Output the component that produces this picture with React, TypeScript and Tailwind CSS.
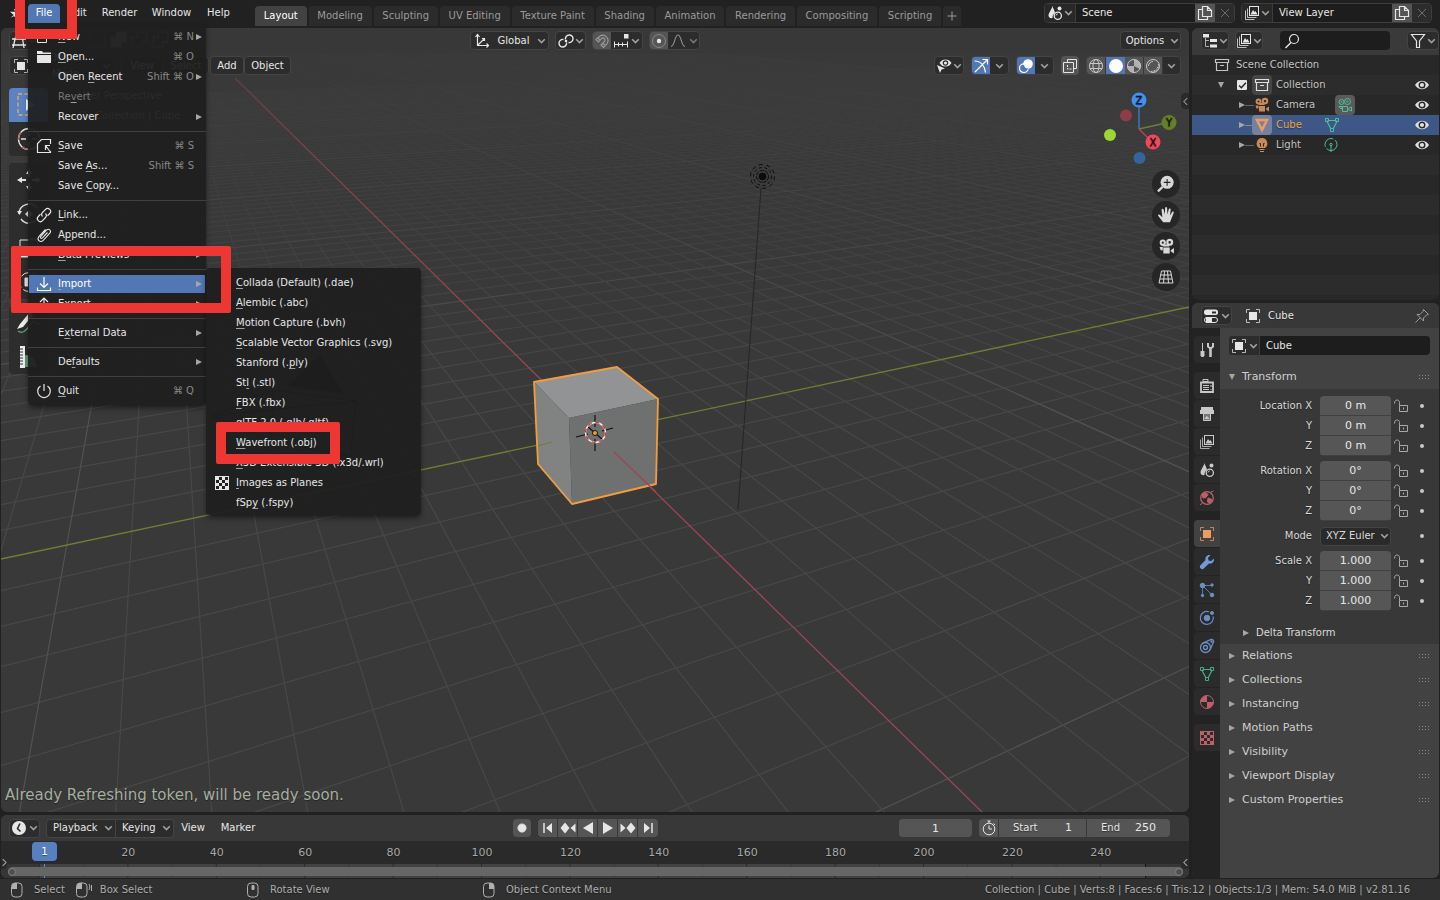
import type { ReactNode } from "react";

/* ---------- icon helpers ---------- */

type IconProps = { children: ReactNode; className?: string; sw?: number };

function Ico({ children, className = "size-4", sw = 1 }: IconProps) {
  return (
    <svg viewBox="0 0 16 16" className={`shrink-0 ${className}`} fill="none" stroke="currentColor" strokeWidth={sw} aria-hidden="true">
      {children}
    </svg>
  );
}

const Chevron = ({ className = "text-[#a0a0a0]" }: { className?: string }) => (
  <svg viewBox="0 0 9 6" className={`h-[6px] w-[9px] shrink-0 ${className}`} fill="none" stroke="currentColor" strokeWidth="1.6" aria-hidden="true">
    <path d="M1.2 1.2 4.5 4.5 7.8 1.2" />
  </svg>
);

const Triangle = ({ down = false }: { down?: boolean }) => (
  <svg viewBox="0 0 6 6" className="size-[6px] shrink-0 fill-[#a6a6a6]" aria-hidden="true">
    <path d={down ? "M0 0h6L3 6z" : "M0 0v6l6-3z"} />
  </svg>
);

const ObjectIcon = ({ className = "size-4" }: { className?: string }) => (
  <Ico className={className}>
    <path d="M1.5 5V1.5H5M11 1.5h3.5V5M14.5 11v3.5H11M5 14.5H1.5V11" opacity=".75" />
    <rect x="4" y="4" width="8" height="8" fill="currentColor" stroke="none" />
  </Ico>
);

const LayersIcon = () => (
  <Ico>
    <rect x="5.5" y="1.5" width="9" height="9" />
    <path d="M6.5 9.5 9 5l1.5 2 1-1 2 3.5z" fill="currentColor" stroke="none" />
    <path d="M3.5 3.5v9h9M1.5 5.5v9h9" opacity=".8" />
  </Ico>
);

const SceneIcon = () => (
  <Ico>
    <path d="M5.5 1C4.5 5 1.5 8 1.5 10.5c0 2 2 3 4 2.500 0-3 1-4 2.500-5C7.500 5 6 3.500 5.500 1z" fill="currentColor" stroke="none" />
    <circle cx="10.8" cy="10.7" r="3.6" strokeWidth="1.3" />
    <path d="M9 10.500c.2-1 .8-1.500 1.800-1.600" />
    <circle cx="12.5" cy="3.5" r="2" fill="currentColor" stroke="none" />
  </Ico>
);

const CameraIcon = ({ className = "size-4" }: { className?: string }) => (
  <Ico className={className}>
    <path
      d="M4.500 1.500a2.900 2.900 0 1 0 0 5.800 2.900 2.900 0 0 0 0-5.800zM4.500 3.400a1 1 0 1 1 0 2 1 1 0 0 1 0-2zM11 .8a3.300 3.300 0 1 0 0 6.600 3.300 3.300 0 0 0 0-6.600zM11 2.900a1.200 1.200 0 1 1 0 2.400 1.200 1.200 0 0 1 0-2.400z"
      fill="currentColor" stroke="none" fillRule="evenodd"
    />
    <path d="M4.500 6h6v2h-6zM5 9h6v5.500H5zM12 11.500 15 9.500v5l-3-2zM1.500 8.500h3v3h-2z" fill="currentColor" stroke="none" />
  </Ico>
);

const CameraOutline = () => (
  <Ico>
    <circle cx="4.5" cy="5" r="2.5" /><circle cx="10.5" cy="4.5" r="3" />
    <circle cx="4.5" cy="5" r=".5" /><circle cx="10.5" cy="4.5" r=".7" />
    <path d="M5.500 9.500h5v5h-5zM11.500 11.500l3-1.500v4l-3-1.500M2 9.500h3v2H3.500z" />
  </Ico>
);

const CollectionIcon = () => (
  <Ico>
    <path d="M1.500 2.500h13v3h-13zM2.500 5.500h11v8h-11zM6 8.500h4" strokeWidth="1.2" />
  </Ico>
);

const EyeIcon = () => (
  <Ico className="h-4 w-4">
    <path d="M1 8c2-3 4.500-4.300 7-4.300S13 5 15 8c-2 3-4.500 4.300-7 4.300S3 11 1 8z" fill="#e0e0e0" stroke="none" />
    <circle cx="8" cy="8" r="2.8" stroke="#282828" strokeWidth="1.4" fill="#e0e0e0" />
  </Ico>
);

const MeshIcon = () => (
  <Ico>
    <path d="M3.500 3.500h9M3.300 5l3.700 7M12.700 5 9 12" strokeWidth="1.2" />
    <path d="M1.500 1.500h3v3h-3zM11.500 1.500h3v3h-3zM6.500 11.500h3v3h-3z" />
  </Ico>
);

const CopyIcon = () => (
  <Ico sw={1.2}>
    <path d="M5.500 1.500h5l4 4v6h-9zM10.500 1.500v4h4M5.500 4.500h-4v10h9v-3" />
  </Ico>
);

const UnlockIcon = () => (
  <Ico className="size-4 text-[#a8a8a8]">
    <path d="M6.500 7.500h8v6h-8zM10.500 9.500v2M1.500 5.500C1.500 2.500 3 2 4 2s2.500.5 2.500 2.500v3" />
  </Ico>
);

const CloseIcon = () => <Ico className="size-4 text-[#6c6c6c]"><path d="m4 4 8 8M12 4l-8 8" /></Ico>;

const Checker = ({ color = "#e6e6e6" }: { color?: string }) => (
  <svg viewBox="0 0 14 14" className="size-[14px] shrink-0" aria-hidden="true">
    <rect x=".5" y=".5" width="13" height="13" fill="none" stroke={color} />
    {[0, 1, 2, 3].flatMap((r) =>
      [0, 1, 2, 3].filter((c) => (r + c) % 2 === 0).map((c) => (
        <rect key={`${r}-${c}`} x={1 + c * 3} y={1 + r * 3} width="3" height="3" fill={color} />
      )),
    )}
  </svg>
);

const Underlined = ({ text, at }: { text: string; at: number }) => (
  <span className="whitespace-pre">
    {at < 0 ? text : text.slice(0, at)}
    {at >= 0 && <u className="decoration-[#a0a0a0] underline-offset-2">{text[at]}</u>}
    {at >= 0 && text.slice(at + 1)}
  </span>
);

/* ---------- top bar ---------- */

const tabs = ["Modeling", "Sculpting", "UV Editing", "Texture Paint", "Shading", "Animation", "Rendering", "Compositing", "Scripting"];

function DataField({ label, value, icon }: { label: string; value: string; icon: ReactNode }) {
  return (
    <div className="flex h-5 w-[191px] overflow-hidden rounded border border-[#3d3d3d] bg-[#1d1d1d]">
      <button type="button" aria-label={`Browse ${label}`} className="flex w-[31px] items-center justify-center gap-px border-r border-[#3d3d3d] bg-[#282828]">
        {icon}<Chevron />
      </button>
      <input aria-label={label} defaultValue={value} className="min-w-0 flex-1 bg-transparent px-[6px] outline-none" />
      <button type="button" aria-label={`New ${label}`} className="flex w-5 items-center justify-center bg-[#545454]"><CopyIcon /></button>
      <button type="button" aria-label={`Remove ${label}`} className="flex w-[19px] items-center justify-center bg-[#2c2c2c]"><CloseIcon /></button>
    </div>
  );
}

function TopBar() {
  return (
    <header className="flex h-7 shrink-0 justify-between pr-2">
      <div className="flex">
        <nav className="flex h-[26px] items-center pl-[9px]">
          <Ico className="size-[15px]"><path d="M1 6h6L5 3.500h2.500L14 9a4 4 0 0 1-7 3l-2-1-3.500 1.500L5 9.500z" fill="currentColor" stroke="none" /></Ico>
          <button type="button" className="ml-1 h-[19px] w-8 rounded-t bg-[#5277b5] text-white">File</button>
          <button type="button" className="h-5 w-[34px]">Edit</button>
          <button type="button" className="h-5 w-[51px]">Render</button>
          <button type="button" className="h-5 w-[53px]">Window</button>
          <button type="button" className="h-5 w-[41px]">Help</button>
        </nav>
        <div className="ml-[16px] flex w-[706px] items-end gap-[2px] pb-[2px] text-[#9a9a9a]">
          <button type="button" className="h-5 flex-auto rounded-t bg-[#424242] px-[8px] text-white">Layout</button>
          {tabs.map((t) => (
            <button key={t} type="button" className="h-5 flex-auto rounded-t bg-[#2b2b2b] px-[8px]">{t}</button>
          ))}
          <button type="button" aria-label="Add workspace" className="flex h-5 w-[18px] items-center justify-center rounded-t bg-[#2b2b2b]">
            <Ico className="size-3"><path d="M8 2v12M2 8h12" strokeWidth="1.4" /></Ico>
          </button>
        </div>
      </div>
      <div className="flex gap-[6px] pt-[3px]">
        <DataField label="Scene" value="Scene" icon={<SceneIcon />} />
        <DataField label="View Layer" value="View Layer" icon={<LayersIcon />} />
      </div>
    </header>
  );
}

/* ---------- 3D viewport ---------- */

const CX = 595, CY = 433, FOCAL = 830, DIST = 18;

function project(x: number, y: number): [number, number] {
  const depth = DIST - (0.807 * x - 0.3746 * y);
  const right = 0.421 * x + 0.9071 * y;
  const up = -0.4141 * x + 0.1922 * y;
  return [CX + (FOCAL * right) / depth, CY - (FOCAL * up) / depth];
}

function gridLines() {
  const lines: { d: string; major: boolean }[] = [];
  const limit = DIST - 2;
  const push = (a: [number, number], b: [number, number], major: boolean) =>
    lines.push({ d: `M${a[0].toFixed(1)} ${a[1].toFixed(1)}L${b[0].toFixed(1)} ${b[1].toFixed(1)}`, major });
  for (let x = -90; x <= 24; x++) {
    if (x === 0) continue;
    const near = Math.max(-120, (0.807 * x - limit) / 0.3746);
    push(project(x, near), project(x, 250), x % 10 === 0);
  }
  for (let y = -50; y <= 90; y++) {
    if (y === 0) continue;
    const near = Math.min(60, (limit + 0.3746 * y) / 0.807);
    push(project(near, y), project(-250, y), y % 10 === 0);
  }
  return lines;
}

function SceneDrawing() {
  return (
    <svg viewBox="1 28 1188 784" preserveAspectRatio="xMidYMid slice" className="absolute inset-0 size-full" aria-label="3D scene">
      <defs>
        <linearGradient id="fade" gradientUnits="userSpaceOnUse" x1="0" y1="50" x2="0" y2="400">
          <stop offset="0" stopColor="#fff" stopOpacity=".1" />
          <stop offset=".4" stopColor="#fff" stopOpacity=".4" />
          <stop offset="1" stopColor="#fff" stopOpacity="1" />
        </linearGradient>
        <mask id="fadeMask" maskUnits="userSpaceOnUse" x="0" y="0" width="1200" height="900">
          <rect width="1200" height="900" fill="url(#fade)" />
        </mask>
        <linearGradient id="redFade" gradientUnits="userSpaceOnUse" x1="235" y1="78" x2="595" y2="433">
          <stop offset="0" stopColor="#9d4552" stopOpacity=".45" />
          <stop offset=".7" stopColor="#9d4552" />
        </linearGradient>
      </defs>
      <g mask="url(#fadeMask)" fill="none">
        {gridLines().map((l, i) => (
          <path key={i} d={l.d} stroke={l.major ? "#525252" : "#484848"} strokeWidth="1.2" />
        ))}
      </g>
      <path d="M1 559 1189 307" stroke="#6d8030" strokeWidth="1.3" />
      <path d="M235 78 595 433" stroke="url(#redFade)" strokeWidth="1.3" />
      <path d="M595 433 982 812" stroke="#9d4552" strokeWidth="1.3" />

      <path d="M761 188 738 510" stroke="#262626" />
      <g fill="none" stroke="#0c0c0c">
        <circle cx="762.5" cy="176.5" r="3.4" fill="#0c0c0c" />
        <circle cx="762.5" cy="176.5" r="6" strokeDasharray="4 1" />
        <circle cx="762.5" cy="176.5" r="9" strokeDasharray="3 2.5" />
        <circle cx="762.5" cy="176.5" r="12" strokeDasharray="4 3.5" />
      </g>

      <path d="m320 355-33 31 57 8z" fill="#000" />
      <path d="m212 416 61-26 83 11-6 55-79-15zM212 416l144-15M212 416l138 40M273 390l-2 51" fill="none" stroke="#000" />

      <path d="M534 382 617 367 658 399 569 418z" fill="#929394" />
      <path d="M534 382 569 418 572 504 538 464z" fill="#818382" />
      <path d="M569 418 658 399 656 484 572 504z" fill="#6f7070" />
      <path d="m534 382 83-15 41 32-2 85-84 20-34-40z" fill="none" stroke="#f19d3f" strokeWidth="1.8" strokeLinejoin="round" />
      <path d="m538 446 14-4" stroke="#6d8030" strokeWidth="1.2" />
      <path d="m614 452 42 40" stroke="#9d4552" strokeWidth="1.3" />
      <g stroke="#111" strokeWidth="1.2">
        <path d="M595 415v12M595 439v12M576 437l12-3M602 431l11-3M587 426l16 14" />
      </g>
      <circle cx="595.5" cy="432.5" r="10" fill="none" stroke="#eee" strokeWidth="1.3" />
      <circle cx="595.5" cy="432.5" r="10" fill="none" stroke="#e02525" strokeWidth="1.3" strokeDasharray="3.9 3.9" />
      <circle cx="595" cy="433" r="2.5" fill="#f19d3f" stroke="#1a1a1a" />
    </svg>
  );
}

const frame = "flex h-[19px] items-center rounded border border-[#444] bg-[#2c2c2c]";
const box = "flex h-[19px] items-center justify-center rounded border border-[#444] bg-[#2c2c2c]";
const onBlue = "flex h-full w-[18px] items-center justify-center bg-[#5277b5] text-white";
const cell = "flex h-full w-[19px] items-center justify-center border-r border-[#383838] bg-[#555] text-[#c8c8c8]";

function ViewportHeader() {
  return (
    <>
      <div className="relative grid h-[25px] grid-cols-[1fr_auto_1fr] items-center bg-[#383838] px-2">
        <div className="flex gap-[10px]">
          <button type="button" aria-label="Editor type" className={`${box} w-[30px] gap-px`}>
            <Ico><path d="M1 6h14M1 12h14M5 2 2 15M11 2l2 13" strokeWidth="1.3" /></Ico><Chevron />
          </button>
          <div className="flex gap-1 pl-10 text-[#5277b5]">
            <Ico className="size-[17px]"><rect x="1" y="1" width="14" height="14" strokeDasharray="2 1" /></Ico>
            <Ico className="size-[17px] text-[#999]"><path d="M1 6h5V1h9v9h-5v5H1z" fill="currentColor" /></Ico>
            <Ico className="size-[17px] text-[#999]"><path d="M1 6h5V1h9v9h-5v5H1z" strokeDasharray="2 1" /></Ico>
            <Ico className="size-[17px] text-[#999]"><path d="M1 6h5V1h9v9h-5v5H1z" /></Ico>
          </div>
        </div>
        <div className="mr-5 flex gap-[6px]">
          <button type="button" className={`${frame} w-[79px] justify-between pl-[3px] pr-[2px]`}>
            <Ico><path d="M3.500 2v10.500H14M3.500 12.500 10 6M1.500 4l2-2.500 2 2.500M12.500 10.500l2 2-2 2M8 5.500h2.500V8" strokeWidth="1.2" /></Ico>
            <span>Global</span><Chevron />
          </button>
          <button type="button" aria-label="Pivot point" className={`${box} w-[31px] gap-px`}>
            <Ico sw={1.4}><path d="M7.500 6.500a3.800 3.800 0 1 1 3 3M8.500 9.500a3.800 3.800 0 1 1-3-3" /><circle cx="8" cy="8" r="1.3" fill="currentColor" stroke="none" /></Ico><Chevron />
          </button>
          <div className={`${box} w-[51px] overflow-hidden`}>
            <button type="button" aria-label="Snap" className="flex h-full w-[18px] items-center justify-center bg-[#555] text-[#999]">
              <Ico sw={1.2}><path d="M2 6.500 5.500 3.500a5.200 5.200 0 0 1 7.300 7.300L9.500 14.500 7 12l3.300-3.500a1.900 1.900 0 0 0-2.800-2.800L4.500 9zM4 5l2.500 2.500M8.700 10l2.500 2.500" /></Ico>
            </button>
            <button type="button" aria-label="Snap to" className="flex flex-1 items-center justify-center gap-[2px]">
              <Ico><path d="M1.500 8.500v6M14.500 8.500v6M1.500 11.500h13M5.500 9.500v4M9.500 9.500v4" /><rect x="11" y="1" width="4.5" height="4.5" fill="currentColor" stroke="none" /></Ico><Chevron />
            </button>
          </div>
          <div className={`${box} w-[51px] overflow-hidden`}>
            <button type="button" aria-label="Proportional editing" className="flex h-full w-[18px] items-center justify-center bg-[#555]">
              <Ico><circle cx="8" cy="8" r="6.5" stroke="#888" /><circle cx="8" cy="8" r="2.2" fill="currentColor" stroke="none" /></Ico>
            </button>
            <button type="button" aria-label="Falloff" className="flex flex-1 items-center justify-center gap-[3px] text-[#8c8c8c]">
              <Ico sw={1.2}><path d="M1 13.500c4-.5 3.500-11.500 7-11.500s3 11 7 11.500" /></Ico><Chevron className="text-[#777]" />
            </button>
          </div>
        </div>
        <button type="button" className={`${box} w-[61px] justify-self-end gap-[6px] pl-1`}>Options<Chevron /></button>
      </div>

      <div className="relative flex h-[25px] items-center justify-between px-2">
        <div className="flex items-center">
          <button type="button" className={`${frame} w-[106px] gap-[6px] px-[3px]`}><ObjectIcon /><span>Object Mode</span><Chevron /></button>
          <button type="button" className={`${box} ml-[6px] w-[42px]`}>View</button>
          <button type="button" className={`${box} w-[46px]`}>Select</button>
          <button type="button" className={`${box} ml-px w-[34px]`}>Add</button>
          <button type="button" className={`${box} w-[47px]`}>Object</button>
        </div>
        <div className="flex gap-[7px]">
          <button type="button" aria-label="Selectability" className={`${box} w-[30px] gap-px`}>
            <Ico>
              <path d="M3.500 5C5 2.500 7 1.500 9.500 1.500s4.500 1 6 3.500c-1.500 2.500-3.500 3.500-6 3.500S5 7.500 3.500 5z" fill="currentColor" stroke="none" />
              <circle cx="9.5" cy="5" r="2.2" stroke="#2c2c2c" strokeWidth="1.2" />
              <path d="m1 7 8 3.500-3.500 1L4 15z" fill="currentColor" stroke="none" />
            </Ico><Chevron />
          </button>
          <div className={`${box} w-[38px] overflow-hidden`}>
            <button type="button" aria-label="Gizmos" className={onBlue}><Ico sw={1.2}><path d="M1.500 3C8 3 12 8 12.500 14.500M2 14 14 2M9.500 1.500h5v5" /></Ico></button>
            <button type="button" aria-label="Gizmo options" className="flex flex-1 justify-center"><Chevron /></button>
          </div>
          <div className={`${box} w-[38px] overflow-hidden`}>
            <button type="button" aria-label="Overlays" className={onBlue}>
              <Ico sw={1.2}><circle cx="10" cy="6" r="4.8" fill="currentColor" stroke="none" /><circle cx="5.8" cy="10.2" r="4.3" /><path d="M5.500 7a4.500 4.500 0 0 0 4.800 4" stroke="#5277b5" /></Ico>
            </button>
            <button type="button" aria-label="Overlay options" className="flex flex-1 justify-center"><Chevron /></button>
          </div>
          <button type="button" aria-label="X-ray" className="flex h-[19px] w-[18px] items-center justify-center rounded bg-[#555]">
            <Ico><path d="M5.500 4.500v-3h9v9h-3" /><path d="M1.500 4.500h10v10h-10z" /><path d="M5.500 7v4h4" strokeDasharray="2 1" /></Ico>
          </button>
          <div className={`${box} w-[95px] overflow-hidden`}>
            <button type="button" aria-label="Wireframe" className={cell}><Ico><circle cx="8" cy="8" r="6.5" /><ellipse cx="8" cy="8" rx="3" ry="6.5" /><path d="M2 5.500h12M2 10.500h12" /></Ico></button>
            <button type="button" aria-label="Solid" className="flex h-full w-[19px] items-center justify-center bg-[#5277b5] text-white"><Ico><circle cx="8" cy="8" r="7" fill="currentColor" stroke="none" /></Ico></button>
            <button type="button" aria-label="Material preview" className={cell}><Ico><circle cx="8" cy="8" r="6.5" /><path d="M8 1.500V8l6 3A6.500 6.500 0 0 0 8 1.500zM8 8v6.500A6.500 6.500 0 0 1 1.500 8z" fill="currentColor" stroke="none" opacity=".8" /></Ico></button>
            <button type="button" aria-label="Rendered" className={cell}><Ico><circle cx="8" cy="8" r="6.5" /><path d="M3.500 8A4.500 4.500 0 0 1 8 3.500" /><path d="M6 13.500c4 0 7.500-3.500 7.500-7.500M9 13.500c2.500-.5 4.500-2.500 5-5" strokeDasharray="1.5 1" /></Ico></button>
            <button type="button" aria-label="Shading options" className="flex flex-1 justify-center"><Chevron /></button>
          </div>
        </div>
      </div>
    </>
  );
}

function ToolShelf() {
  const tool = "flex h-[34px] w-[39px] items-center justify-center";
  return (
    <div className="absolute left-2 top-[60px] flex flex-col gap-[7px]">
      <div className="overflow-hidden rounded bg-[#2d2d2d]">
        <button type="button" aria-label="Select box" className={`${tool} bg-[#5b83c4]`}>
          <svg viewBox="0 0 24 24" className="size-6"><rect x="1" y="1" width="21" height="21" fill="none" stroke="#f5a94a" strokeWidth="1.3" strokeDasharray="4 2.5" /><path d="m9 6 10 6.500-5 1L9 18z" fill="#fff" /></svg>
        </button>
        <button type="button" aria-label="Cursor" className={tool}>
          <svg viewBox="0 0 24 24" className="size-6" fill="none" stroke="#e6e6e6" strokeWidth="1.3"><circle cx="12" cy="12" r="10.5" /><circle cx="12" cy="12" r="10.5" stroke="#b55" strokeDasharray="8 8" /><path d="M12 4v5M12 15v5M4 12h5M15 12h5" /></svg>
        </button>
      </div>
      <div className="overflow-hidden rounded bg-[#2d2d2d]">
        <button type="button" aria-label="Move" className={tool}>
          <svg viewBox="0 0 24 24" className="size-6" fill="#e6e6e6"><path d="m0 12 5-3v2h4v2H5v2zM24 12l-5-3v2h-4v2h4v2zM12 1 9 6h2v3h2V6h2zM12 23l-3-5h2v-3h2v3h2z" /></svg>
        </button>
        <button type="button" aria-label="Rotate" className={tool}>
          <svg viewBox="0 0 24 24" className="size-6" fill="none" stroke="#e6e6e6" strokeWidth="1.3"><path d="M2 12a10 10 0 0 1 18-6M4 17a10 10 0 0 0 18-5" /><path d="M0 9h5l-2.500 4zM12 8l4 4-4 4-4-4z" fill="#e6e6e6" stroke="none" /></svg>
        </button>
        <button type="button" aria-label="Scale" className={tool}>
          <svg viewBox="0 0 24 24" className="size-6" fill="none" stroke="#e6e6e6"><path d="M3 4h18M3 4v18M13 3l8 0v8" /><path d="M3 12h9v9H3z" fill="#e6e6e6" /></svg>
        </button>
        <button type="button" aria-label="Transform" className={tool}>
          <svg viewBox="0 0 24 24" className="size-6" fill="none" stroke="#e6e6e6"><circle cx="12" cy="12" r="9.5" strokeDasharray="9 3" /><path d="M8 8h8v8H8z" fill="#e6e6e6" /></svg>
        </button>
      </div>
      <div className="overflow-hidden rounded bg-[#2d2d2d]">
        <button type="button" aria-label="Annotate" className={tool}>
          <svg viewBox="0 0 24 24" className="size-6" fill="none"><path d="M1 20c5 4 9-2 13-7s6-1 9 1" stroke="#5f9c72" strokeWidth="1.3" /><path d="M0 18 3 13 13 1l3 3L6 16z" fill="#eee" /></svg>
        </button>
        <button type="button" aria-label="Measure" className={tool}>
          <svg viewBox="0 0 24 24" className="size-6"><path d="M3 1h5v22H3z" fill="#eee" /><path d="M3 4h3M3 7h3M3 10h3M3 13h3M3 16h3M3 19h3" stroke="#333" /><path d="M8 10c7 0 12 6 12 12H8z" fill="#5f9c72" /></svg>
        </button>
      </div>
    </div>
  );
}

function AxisGizmo() {
  return (
    <svg viewBox="0 0 80 76" className="absolute right-2 top-[62px] h-[76px] w-20" textAnchor="middle" aria-label="Orientation gizmo">
      <circle cx="25" cy="25.5" r="6" fill="#8d3d48" />
      <circle cx="38.5" cy="68" r="6" fill="#35649a" />
      <path d="M38 39V17" stroke="#3f7fc0" strokeWidth="1.3" />
      <path d="m38 39 27-6" stroke="#6d8030" strokeWidth="1.3" />
      <path d="m38 39 10 10" stroke="#c04555" strokeWidth="1.3" />
      <circle cx="9" cy="45" r="6" fill="#9bd836" />
      <circle cx="38" cy="10" r="7.5" fill="#3d92f3" />
      <circle cx="68" cy="32.5" r="7.5" fill="#657e29" />
      <circle cx="52" cy="52" r="7.5" fill="#f0485c" />
      <g fill="#141414" stroke="#141414" strokeWidth=".3" fontSize="10">
        <text x="38" y="14">Z</text><text x="68" y="36">Y</text><text x="52" y="56">X</text>
      </g>
    </svg>
  );
}

function NavButtons() {
  const b = "flex size-7 items-center justify-center rounded-full bg-[#262626] text-[#d8d8d8]";
  return (
    <div className="absolute right-[9px] top-[142px] flex flex-col gap-[3px]">
      <button type="button" aria-label="Zoom" className={b}>
        <Ico className="size-[18px]"><circle cx="9" cy="6.5" r="5.8" fill="currentColor" stroke="none" /><path d="M5 10.500.8 14.500" strokeWidth="2" /><path d="M9 3.500v6M6 6.500h6" stroke="#262626" /></Ico>
      </button>
      <button type="button" aria-label="Pan" className={b}>
        <Ico className="size-[18px]"><path d="M5.500 14.500C4 12.500 2.500 10.500.8 8.500c.3-1.300 1.600-1 2.700.3L4.800 10 4 3c.8-1.200 1.800-.6 2 .5L7 7.500 7.200 1.500c.8-1 1.700-.6 1.800.4L9.200 7.500 10.600 2.500c1-.8 1.700-.1 1.600.9L11.500 8.500 13.600 5c1.200-.3 1.500.4 1.200 1.300L12.500 12l-1 2.500z" fill="currentColor" stroke="none" /></Ico>
      </button>
      <button type="button" aria-label="Camera view" className={b}><CameraIcon className="size-[17px]" /></button>
      <button type="button" aria-label="Perspective" className={b}>
        <Ico><path d="M3.500 2h9L15 14H1zM2.500 6h11M2 10h12M6.500 2 5.500 14M9.500 2l1 12" /></Ico>
      </button>
    </div>
  );
}

function Viewport() {
  return (
    <section aria-label="3D Viewport" className="relative min-h-0 flex-1 overflow-hidden rounded-md bg-[#393939]">
      <SceneDrawing />
      <ViewportHeader />
      <ToolShelf />
      <div className="absolute left-[77px] top-[58px] leading-5 text-[#d8d8d8]">
        <p>User Perspective</p>
        <p>(1) Collection | Cube</p>
      </div>
      <AxisGizmo />
      <NavButtons />
      <button type="button" aria-label="Open sidebar" className="absolute right-0 top-[65px] flex h-4 w-2 items-center justify-center rounded-l bg-[#2a2a2a]">
        <Ico className="size-[9px] text-[#999]"><path d="M11 2 5 8l6 6" strokeWidth="1.8" /></Ico>
      </button>
      <p className="absolute bottom-[7px] left-1 text-[15px] leading-5 text-[#a5ae9f]">Already Refreshing token, will be ready soon.</p>
    </section>
  );
}

/* ---------- timeline ---------- */

function Timeline() {
  const frames = Array.from({ length: 12 }, (_, i) => (i + 1) * 20);
  const t = "flex h-full w-5 items-center justify-center border-r border-[#383838] last:border-0";
  return (
    <section aria-label="Timeline" className="relative h-[63px] shrink-0 overflow-hidden rounded-md bg-[#424242]">
      <div className="grid h-[26px] grid-cols-[1fr_auto_1fr] items-center bg-[#383838] pl-2 pr-[19px]">
        <div className="flex items-center">
          <button type="button" aria-label="Editor type" className={`${box} w-[31px] gap-[2px]`}>
            <Ico><circle cx="8" cy="8" r="7" fill="currentColor" stroke="none" /><path d="M9 3.500 6.500 8.500 9.500 11.500" stroke="#2c2c2c" strokeWidth="1.6" /></Ico><Chevron />
          </button>
          <button type="button" className={`${frame} ml-[6px] w-[70px] justify-between rounded-r-none pl-[6px] pr-[2px]`}>Playback<Chevron /></button>
          <button type="button" className={`${frame} w-[58px] justify-between rounded-l-none border-l-0 pl-[6px] pr-[2px]`}>Keying<Chevron /></button>
          <button type="button" className="ml-[5px] w-[28px]">View</button>
          <button type="button" className="ml-[11px] w-10">Marker</button>
        </div>
        <div className="mr-[8px] flex gap-[7px] text-[#e6e6e6]">
          <button type="button" aria-label="Auto keying" className="flex h-[18px] w-[18px] items-center justify-center rounded bg-[#555]"><Ico className="size-3"><circle cx="8" cy="8" r="5.5" fill="currentColor" /></Ico></button>
          <div className="flex h-[18px] overflow-hidden rounded bg-[#555]">
            <button type="button" aria-label="Jump to start" className={t}><Ico><path d="M4 3v10" strokeWidth="1.5" /><path d="m12 3-6 5 6 5z" fill="currentColor" stroke="none" /></Ico></button>
            <button type="button" aria-label="Previous keyframe" className={t}><Ico><path d="m5 2.500 4.500 5.500L5 13.500.5 8zM15.500 3.500v9L10.500 8z" fill="currentColor" stroke="none" /></Ico></button>
            <button type="button" aria-label="Play reverse" className={t}><Ico><path d="M13 2v12L3 8z" fill="currentColor" stroke="none" /></Ico></button>
            <button type="button" aria-label="Play" className={t}><Ico><path d="M3 2v12l10-6z" fill="currentColor" stroke="none" /></Ico></button>
            <button type="button" aria-label="Next keyframe" className={t}><Ico><path d="m11 2.500 4.500 5.500-4.500 5.500L6.500 8zM.5 3.500v9l5-4.500z" fill="currentColor" stroke="none" /></Ico></button>
            <button type="button" aria-label="Jump to end" className={t}><Ico><path d="M12 3v10" strokeWidth="1.5" /><path d="m4 3 6 5-6 5z" fill="currentColor" stroke="none" /></Ico></button>
          </div>
        </div>
        <div className="flex items-center justify-self-end text-[#e6e6e6]">
          <input aria-label="Current frame" defaultValue="1" className="h-[18px] w-[73px] rounded bg-[#555] text-center text-[11px] outline-none" />
          <button type="button" aria-label="Use preview range" className="ml-[7px] flex h-[18px] w-[19px] items-center justify-center rounded-l bg-[#555]">
            <Ico><circle cx="8" cy="9" r="5.8" /><path d="M8 5.500V9h3M6.500 1h3M8 1v2M12.500 3.500l1.500 1.500" /></Ico>
          </button>
          <label className="ml-px flex h-[18px] w-[87px] items-center justify-between bg-[#555] px-[14px]">Start<input defaultValue="1" className="w-5 bg-transparent text-right text-[11px] outline-none" /></label>
          <label className="ml-px flex h-[18px] w-[83px] items-center justify-between rounded-r bg-[#555] px-[14px]">End<input defaultValue="250" className="w-6 bg-transparent text-right text-[11px] outline-none" /></label>
        </div>
      </div>
      <div className="grid h-[23px] grid-cols-12 items-center bg-[#2a2a2a] pl-[7%] pr-[3.7%] text-center text-[11px] text-[#a8a8a8]">
        {frames.map((f) => <span key={f}>{f}</span>)}
      </div>
      <svg viewBox="0 0 1188 14" preserveAspectRatio="none" className="h-[14px] w-full" aria-hidden="true">
        <rect width="39" height="14" fill="#363636" /><rect x="1144" width="44" height="14" fill="#363636" />
        {Array.from({ length: 25 }, (_, i) => (
          <path key={i} d={`M${38.5 + i * 44.2} 0v14`} stroke={i % 2 ? "#383838" : "#2c2c2c"} />
        ))}
        <path d="M1144.5 0v14" stroke="#111" />
        <path d="M43.5 0v14" stroke="#5b8ad0" />
      </svg>
      <div className="absolute bottom-[2px] left-[7px] right-[6px] flex h-[9px] items-center justify-between rounded-full bg-[#666]">
        <span className="size-2 rounded-full border border-[#808080] bg-[#4f4f4f]" />
        <span className="size-2 rounded-full border border-[#808080] bg-[#4f4f4f]" />
      </div>
      <span className="absolute left-[31px] top-[27px] flex h-[19px] w-[25px] items-center justify-center rounded bg-[#5680bf] text-[11px] text-white">1</span>
      <button type="button" aria-label="Show channels" className="absolute left-0 top-10 flex h-[14px] w-[6px] items-center rounded-r bg-[#2a2a2a]"><Ico className="size-[9px] text-[#aaa]"><path d="m3 2 6 6-6 6" strokeWidth="1.8" /></Ico></button>
      <button type="button" aria-label="Show sidebar" className="absolute right-0 top-10 flex h-[14px] w-[8px] items-center rounded-l bg-[#2a2a2a]"><Ico className="size-[9px] text-[#aaa]"><path d="M11 2 5 8l6 6" strokeWidth="1.8" /></Ico></button>
    </section>
  );
}

/* ---------- outliner ---------- */

const outlineRow = "flex h-5 shrink-0 items-center pr-[9px]";

function Outliner() {
  const leaf = "ml-[47px] flex h-5 w-[15px] items-center";
  return (
    <section aria-label="Outliner" className="h-[272px] shrink-0 overflow-hidden rounded-md bg-[#282828]">
      <div className="flex h-[27px] items-center bg-[#3a3a3a] pb-[2px] pl-[9px]">
        <button type="button" aria-label="Editor type" className={`${box} w-[31px] gap-px`}>
          <Ico><path d="M1 1h6v3.500H1zM8 6h7v3H8zM8 11.500h7v3H8z" fill="currentColor" stroke="none" /><path d="M3.500 5v8.500H7M3.500 7.500H7" opacity=".7" /></Ico><Chevron />
        </button>
        <button type="button" aria-label="Display mode" className={`${box} ml-[6px] w-[31px] gap-px`}><LayersIcon /><Chevron /></button>
        <label className="ml-[17px] flex h-[19px] w-[110px] shrink-0 items-center rounded bg-[#1d1d1d] px-1">
          <Ico><circle cx="10" cy="6" r="4.5" strokeWidth="1.2" /><path d="M7 9.500 1.500 15" strokeWidth="1.5" /></Ico>
          <input aria-label="Filter outliner" className="w-full min-w-0 bg-transparent outline-none" />
        </label>
        <button type="button" aria-label="Filter" className={`${box} ml-[17px] w-[32px] shrink-0 gap-px`}>
          <Ico sw={1.2}><path d="M1.500 1.500h13L9.500 8v6.500h-3V8z" /></Ico><Chevron />
        </button>
      </div>
      <div className="text-[#c4c4c4]">
        <div className={`${outlineRow} pl-[22px]`}><CollectionIcon /><span className="ml-[6px]">Scene Collection</span></div>
        <div className={`${outlineRow} bg-[#2c2c2c] pl-[26px]`}>
          <Triangle down />
          <label className="ml-[13px] grid size-[10px] place-items-center">
            <input type="checkbox" aria-label="Show Collection" defaultChecked className="col-start-1 row-start-1 size-[10px] appearance-none rounded-[1px] bg-[#e6e6e6]" />
            <Ico className="col-start-1 row-start-1 size-[9px] text-[#222]"><path d="m2 8 4 4 8-9" strokeWidth="2.5" /></Ico>
          </label>
          <span className="ml-[5px] flex size-5 items-center justify-center rounded bg-[#454545] text-[#e0e0e0]"><CollectionIcon /></span>
          <span className="ml-1">Collection</span>
          <span className="ml-auto"><EyeIcon /></span>
        </div>
        <div className={outlineRow}>
          <span className={leaf}><Triangle /><i className="h-px flex-1 bg-[#666]" /></span>
          <span className="flex size-4 items-center justify-center text-[#c88a5a]"><CameraIcon /></span>
          <span className="ml-[6px]">Camera</span>
          <span className="ml-[20px] flex size-5 items-center justify-center rounded bg-[#5a5a5a] text-[#4bbf9c]"><CameraOutline /></span>
          <span className="ml-auto"><EyeIcon /></span>
        </div>
        <div className={`${outlineRow} bg-[#3d5887]`}>
          <span className={leaf}><Triangle /><i className="h-px flex-1 bg-[#8a8a8a]" /></span>
          <span className="-ml-[2px] flex size-5 items-center justify-center rounded bg-[#75829f] text-[#ee9b63]">
            <Ico><path d="M3 3h10L8 13z" strokeWidth="2.5" /></Ico>
          </span>
          <span className="ml-1 text-[#f0a13c]">Cube</span>
          <span className="ml-[22px] text-[#4bbf9c]"><MeshIcon /></span>
          <span className="ml-auto"><EyeIcon /></span>
        </div>
        <div className={outlineRow}>
          <span className={leaf}><Triangle /><i className="h-px flex-1 bg-[#666]" /></span>
          <span className="text-[#c88a5a]">
            <Ico><path d="M8 1a5.500 5.500 0 0 0-3 10h6A5.500 5.500 0 0 0 8 1zM5.500 12h5v1h-5zM6 14h4v1H6z" fill="currentColor" stroke="none" /><path d="M5.500 6.500h1v3M10.500 6.500h-1v3" stroke="#282828" /></Ico>
          </span>
          <span className="ml-[6px]">Light</span>
          <span className="ml-[22px] text-[#4bbf9c]"><Ico><circle cx="8" cy="7.5" r="6" strokeDasharray="14 2" /><circle cx="8" cy="7.5" r="1.2" /><path d="M8 9v6" /></Ico></span>
          <span className="ml-auto"><EyeIcon /></span>
        </div>
      </div>
      {[0, 1, 2, 3].map((i) => (
        <div key={i}><div className="h-5 bg-[#2c2c2c]" /><div className="h-5" /></div>
      ))}
    </section>
  );
}

/* ---------- properties ---------- */

const Grip = () => (
  <svg viewBox="0 0 11 5" className="h-[5px] w-[11px] fill-[#8a8a8a]" aria-hidden="true">
    {[0, 3, 6, 9].flatMap((x) => [0, 3].map((y) => <rect key={`${x}${y}`} x={x} y={y} width="1" height="1" />))}
  </svg>
);

const Dot = () => <span className="size-1 rounded-full bg-[#c8c8c8]" />;

function VectorRows({ name, value }: { name: string; value: string }) {
  return (
    <div className="grid grid-cols-[92px_71px_auto] gap-x-2">
      <div className="text-right leading-5">
        {["X", "Y", "Z"].map((a) => <div key={a}>{a === "X" ? `${name} X` : a}</div>)}
      </div>
      <div className="flex flex-col gap-px overflow-hidden rounded bg-[#404040]">
        {["X", "Y", "Z"].map((a) => (
          <input key={a} aria-label={`${name} ${a}`} defaultValue={value} className="h-[19px] w-full bg-[#565656] text-center text-[11px] text-[#e6e6e6] outline-none" />
        ))}
      </div>
      <div className="-ml-[6px] pr-[15px]">
        {["X", "Y", "Z"].map((a) => (
          <div key={a} className="flex h-5 items-center justify-between">
            <button type="button" aria-label={`Lock ${name} ${a}`}><UnlockIcon /></button><Dot />
          </div>
        ))}
      </div>
    </div>
  );
}

const tabGroups: { color: string; icon: ReactNode; name: string; active?: boolean }[][] = [
  [{ name: "Tool", color: "text-[#c8c8c8]", icon: <Ico><path d="M3.500 1v8" /><path d="M1.500 9h4v4.500L4.500 15h-2l-1-1.500z" fill="currentColor" stroke="none" /><path d="M11.500 6v9" strokeWidth="2.6" /><path d="M9 1v3.500l2.500 2L14 4.500V1" strokeWidth="2" /></Ico> }],
  [
    { name: "Render", color: "text-[#c8c8c8]", icon: <Ico><path d="M2 4.500h12v9.500H2z" strokeWidth="1.8" /><path d="M4 7.500h6M4 9.500h6M4 11.500h6M12 7v2M12 11v1" /><path d="M4 1.500h5v2H4z" /></Ico> },
    { name: "Output", color: "text-[#c8c8c8]", icon: <Ico><path d="M2 1h12v3H2zM1 4h14v4H1z" fill="currentColor" stroke="none" /><path d="M4.500 7.500h7v7h-7z" fill="#777" /><path d="m5.500 13 2-3 1.500 1 1.500 2z" fill="currentColor" stroke="none" /></Ico> },
    { name: "View Layer", color: "text-[#c8c8c8]", icon: <LayersIcon /> },
    { name: "Scene", color: "text-[#c8c8c8]", icon: <SceneIcon /> },
    { name: "World", color: "text-[#bd6069]", icon: <Ico><circle cx="8" cy="8" r="6.3" strokeWidth="1.3" /><path d="M3 4.500 7 2.500l2 2-2 3-3 .5zM9 8l4 1.500-2 3.500-2.500-1zM12 2l2.500-1" fill="currentColor" /><path d="M1 15l2.500-2" /></Ico> },
  ],
  [
    { name: "Object", color: "text-[#ee9b5c]", icon: <ObjectIcon />, active: true },
    { name: "Modifiers", color: "text-[#6f9bd8]", icon: <Ico><path d="M14.800 4.500 12.300 7 9.500 6.500 9 3.700 11.500 1.200C8.500.2 5.700 3 6.500 6L1 11.800c-.8 2 1.200 4 3.200 3.200L10 9.500c3 .8 5.800-2 4.800-5z" fill="currentColor" stroke="none" /></Ico> },
    { name: "Particles", color: "text-[#6a8fc4]", icon: <Ico><path d="M3.500 3.500h9M3.500 3.500v10M3.500 3.500l9 9" opacity=".8" /><circle cx="3.5" cy="3.5" r="2.3" fill="currentColor" /><circle cx="13" cy="3" r="1.2" fill="currentColor" /><circle cx="3.5" cy="13.5" r="1.2" fill="currentColor" /><circle cx="13" cy="13" r="1.8" fill="currentColor" /></Ico> },
    { name: "Physics", color: "text-[#6a8fc4]", icon: <Ico><path d="M10 1.800a6.500 6.500 0 1 0 4.200 4.700" strokeWidth="1.2" /><circle cx="8" cy="8" r="2.8" fill="currentColor" /><circle cx="13" cy="3" r="1.5" fill="currentColor" /></Ico> },
    { name: "Constraints", color: "text-[#6a8fc4]", icon: <Ico sw={1.3}><path d="M3 5.500 12 1.500c2-.3 3 1 2.500 2.500L11 12" /><circle cx="6.5" cy="9.5" r="5" /><circle cx="6.5" cy="9.5" r="2" /><circle cx="12.5" cy="3.5" r=".6" /></Ico> },
    { name: "Object Data", color: "text-[#3fb08b]", icon: <MeshIcon /> },
    { name: "Material", color: "text-[#bd6069]", icon: <Ico><circle cx="8" cy="8" r="6.5" /><path d="M8 1.500V8h6.500A6.500 6.500 0 0 1 8 14.500V8H1.500A6.500 6.500 0 0 1 8 1.500z" fill="currentColor" stroke="none" /></Ico> },
  ],
  [{ name: "Texture", color: "text-[#bd6069]", icon: <Checker color="#bd6069" /> }],
];

function Properties() {
  return (
    <section aria-label="Properties" className="flex min-h-0 flex-1 flex-col overflow-hidden rounded-md bg-[#424242]">
      <div className="flex h-[25px] shrink-0 items-center bg-[#383838] pl-[9px] pr-[9px]">
        <button type="button" aria-label="Editor type" className={`${box} w-[31px] gap-[2px]`}>
          <Ico><rect x="1" y="1.5" width="14" height="5.5" rx="2.5" fill="currentColor" stroke="none" /><rect x="1.5" y="9.5" width="13" height="5" rx="2.5" /><path d="M3 9h6v6H3z" fill="currentColor" stroke="none" /><path d="M9 3.500h4v2H9z" fill="#2c2c2c" stroke="none" /></Ico><Chevron />
        </button>
        <span className="ml-[13px]"><ObjectIcon /></span>
        <span className="ml-[7px]">Cube</span>
        <button type="button" aria-label="Pin" className="ml-auto text-[#9a9a9a]"><Ico><path d="M9.500 1.500 14.500 6.500 12.500 7 9.500 10v3l-6.500-6.500h3l3-3zM6 10l-4.500 4.500" /></Ico></button>
      </div>
      <div className="flex min-h-0 flex-1">
        <div className="flex w-7 shrink-0 flex-col gap-[9px] bg-[#232323] pl-[2px] pt-2">
          {tabGroups.map((g, i) => (
            <div key={i} className="flex flex-col gap-px">
              {g.map((t) => (
                <button key={t.name} type="button" aria-label={t.name} className={`flex h-[27px] items-center justify-center rounded-l ${t.color} ${t.active ? "bg-[#424242]" : "bg-[#2b2b2b]"}`}>{t.icon}</button>
              ))}
            </div>
          ))}
        </div>
        <div className="min-w-0 flex-1">
          <div className="mx-[9px] mt-2 flex h-[19px] overflow-hidden rounded bg-[#1d1d1d]">
            <button type="button" aria-label="Browse object" className="flex w-[31px] items-center justify-center gap-[2px] border-r border-[#3d3d3d] bg-[#2c2c2c]"><ObjectIcon /><Chevron /></button>
            <input aria-label="Object name" defaultValue="Cube" className="min-w-0 flex-1 bg-transparent px-[6px] outline-none" />
          </div>
          <button type="button" className="mt-[10px] flex h-6 w-full items-center gap-[7px] px-[9px] text-[11px] text-[#cfcfcf]"><Triangle down />Transform<span className="ml-auto"><Grip /></span></button>
          <div className="bg-[#383838] pt-[7px] text-[#d8d8d8]">
            <VectorRows name="Location" value="0 m" />
            <div className="h-[5px]" />
            <VectorRows name="Rotation" value="0°" />
            <div className="my-[5px] grid h-5 grid-cols-[92px_71px_auto] items-center gap-x-2">
              <label htmlFor="mode" className="text-right">Mode</label>
              <div className="relative flex items-center">
                <select id="mode" className="h-[19px] w-full appearance-none rounded border border-[#444] bg-[#2a2a2a] pl-[5px] outline-none"><option>XYZ Euler</option></select>
                <span className="pointer-events-none absolute right-[2px]"><Chevron /></span>
              </div>
              <span className="flex justify-end pr-[15px]"><Dot /></span>
            </div>
            <VectorRows name="Scale" value="1.000" />
            <button type="button" className="mt-[10px] flex h-[23px] items-center gap-[7px] pl-[23px]"><Triangle />Delta Transform</button>
          </div>
          {["Relations", "Collections", "Instancing", "Motion Paths", "Visibility", "Viewport Display", "Custom Properties"].map((n) => (
            <button key={n} type="button" className="flex h-6 w-full items-center gap-[7px] px-[9px] text-[11px] text-[#cfcfcf]"><Triangle />{n}<span className="ml-auto"><Grip /></span></button>
          ))}
        </div>
      </div>
    </section>
  );
}

/* ---------- status bar ---------- */

const Mouse = ({ part, drag = false }: { part: "left" | "middle" | "right"; drag?: boolean }) => (
  <svg viewBox={drag ? "0 0 17 16" : "0 0 12 16"} className={`h-4 shrink-0 ${drag ? "w-[17px]" : "w-3"}`} fill="none" stroke="#b0b0b0" aria-hidden="true">
    <rect x=".5" y="1" width="10.5" height="14" rx="3.5" />
    {part === "left" && <path d="M1 7V4a3 3 0 0 1 3-3h2v6z" fill="#b0b0b0" stroke="none" />}
    {part === "right" && <path d="M11 7V4a3 3 0 0 0-3-3H6v6z" fill="#b0b0b0" stroke="none" />}
    {part === "middle" && <rect x="4.5" y="3" width="3" height="5" rx="1" fill="#b0b0b0" stroke="none" />}
    {drag && <path d="M13 2c1 1.500 1 4 0 6M15.500 3v6" />}
  </svg>
);

function StatusBar() {
  return (
    <footer className="mt-px flex h-[21px] shrink-0 items-center bg-[#303030] pl-[11px] pr-[30px] text-[#acacac]">
      <div className="flex w-[236px] items-center"><Mouse part="left" /><span className="ml-[11px]">Select</span><span className="ml-[11px]"><Mouse part="left" drag /></span><span className="ml-[7px]">Box Select</span></div>
      <div className="flex w-[236px] items-center gap-[11px]"><Mouse part="middle" /><span>Rotate View</span></div>
      <div className="flex items-center gap-[11px]"><Mouse part="right" /><span>Object Context Menu</span></div>
      <span className="ml-auto">Collection | Cube | Verts:8 | Faces:6 | Tris:12 | Objects:1/3 | Mem: 54.0 MiB | v2.81.16</span>
    </footer>
  );
}

/* ---------- menus ---------- */

type Item = { text: string; at: number; key?: string; sub?: boolean; icon?: ReactNode; off?: boolean; active?: boolean };

const fileMenu: Item[][] = [
  [
    { text: "New", at: 0, key: "⌘ N", sub: true, icon: <Ico><path d="M1.500 4.500h9v9h-9zM11 3l3-2" /></Ico> },
    { text: "Open...", at: 0, key: "⌘ O", icon: <Ico><path d="M1 2h5l1 1.500h8V5H1zM1 6h14v8H1z" fill="currentColor" stroke="none" /></Ico> },
    { text: "Open Recent", at: 5, key: "Shift ⌘ O", sub: true },
    { text: "Revert", at: 2, off: true },
    { text: "Recover", at: -1, sub: true },
  ],
  [
    { text: "Save", at: 0, key: "⌘ S", icon: <Ico sw={1.2}><path d="M14.500 6V1.500H5.500l-4 4v9h13V13M14 13.500 9.500 7.500M9.500 12V7.500H14" /></Ico> },
    { text: "Save As...", at: 5, key: "Shift ⌘ S" },
    { text: "Save Copy...", at: 5 },
  ],
  [
    { text: "Link...", at: 0, icon: <Ico sw={1.2}><path d="M6.500 9.500a2.700 2.700 0 0 1 0-4L9.500 2.300a2.900 2.900 0 0 1 4.200 4.200L11.500 8.800M9.500 6.500a2.700 2.700 0 0 1 0 4l-3 3.200a2.900 2.900 0 0 1-4.200-4.200L4.500 7.200" /></Ico> },
    { text: "Append...", at: 1, icon: <Ico sw={1.1}><path d="m11.500 5.500-5 5.300c-1.300 1.300-2.800 0-1.600-1.400l5.600-6.200c2.300-2.300 5.300.6 3.300 3l-6.500 7.100c-3.200 3-7-.7-4.200-4L9.500 2.500" /></Ico> },
    { text: "Data Previews", at: 0, sub: true },
  ],
  [
    { text: "Import", at: 0, sub: true, active: true, icon: <Ico sw={1.2}><path d="M8 1v10M4 7.500 8 11.500l4-4M1.500 11.500v3h13v-3" /></Ico> },
    { text: "Export", at: 0, sub: true, icon: <Ico sw={1.2}><path d="M8 12V2.500M4 6 8 2l4 4M1.500 11.500v3h13v-3" /></Ico> },
  ],
  [{ text: "External Data", at: 1, sub: true }],
  [{ text: "Defaults", at: 2, sub: true }],
  [{ text: "Quit", at: 0, key: "⌘ Q", icon: <Ico sw={1.2}><path d="M4.500 3a6.300 6.300 0 1 0 7 0M8 1v7" /></Ico> }],
];

const importMenu: Item[] = [
  { text: "Collada (Default) (.dae)", at: 0 },
  { text: "Alembic (.abc)", at: 0 },
  { text: "Motion Capture (.bvh)", at: 0 },
  { text: "Scalable Vector Graphics (.svg)", at: 0 },
  { text: "Stanford (.ply)", at: 11 },
  { text: "Stl (.stl)", at: 2 },
  { text: "FBX (.fbx)", at: 0 },
  { text: "glTF 2.0 (.glb/.gltf)", at: 0 },
  { text: "Wavefront (.obj)", at: 0 },
  { text: "X3D Extensible 3D (.x3d/.wrl)", at: 0 },
  { text: "Images as Planes", at: 0, icon: <Checker /> },
  { text: "fSpy (.fspy)", at: 3 },
];

function MenuRow({ item }: { item: Item }) {
  return (
    <li className="flex h-5 items-center px-px" role="none">
      <button type="button" role="menuitem" className={`flex h-[18px] w-full items-center pl-[7px] pr-[3px] ${item.active ? "bg-[#5277b5] text-white" : ""} ${item.off ? "text-[#777]" : ""}`}>
        <span className="mr-[6px] flex w-4 justify-center">{item.icon}</span>
        <Underlined text={item.text} at={item.at} />
        <span className="ml-auto text-[#888]">{item.key}</span>
        <span className="flex w-[8px] justify-end">{item.sub && <Triangle />}</span>
      </button>
    </li>
  );
}

function Menus() {
  return (
    <>
      <div role="menu" aria-label="File" className="absolute left-7 top-[23px] w-[178px] rounded-b bg-[#1f1f1f]/94 pb-1 pt-1 shadow-md shadow-black/40">
        {fileMenu.map((g, i) => (
          <ul key={i} className={i ? "mt-1 border-t border-[#404040] pt-1" : ""}>
            {g.map((it) => <MenuRow key={it.text} item={it} />)}
          </ul>
        ))}
      </div>
      <ul role="menu" aria-label="Import" className="absolute left-[206px] top-[268px] w-[215px] rounded bg-[#1f1f1f]/94 pb-[2px] pt-[5px] shadow-md shadow-black/40">
        {importMenu.map((it) => <MenuRow key={it.text} item={it} />)}
      </ul>
      <div className="pointer-events-none absolute -top-3 left-[15px] h-[51px] w-[62px] rounded-xs border-10 border-[#ee3733]" />
      <div className="pointer-events-none absolute left-[11px] top-[246px] h-[67px] w-[220px] rounded-xs border-10 border-[#ee3733]" />
      <div className="pointer-events-none absolute left-[216px] top-[422px] h-[42px] w-[124px] rounded-xs border-10 border-[#ee3733]" />
    </>
  );
}

export default function App() {
  return (
    <div className="relative flex h-screen min-h-[600px] w-full flex-col overflow-hidden bg-[#212121] text-[10px] leading-4 text-[#e6e6e6] [font-family:'DejaVu_Sans',sans-serif] [text-shadow:0_1px_1px_rgba(0,0,0,0.4)]">
      <TopBar />
      <div className="flex min-h-0 flex-1 gap-[3px] px-px">
        <main className="flex min-w-0 flex-1 flex-col gap-[3px]">
          <Viewport />
          <Timeline />
        </main>
        <aside className="flex w-[247px] shrink-0 flex-col gap-[3px]">
          <Outliner />
          <Properties />
        </aside>
      </div>
      <StatusBar />
      <Menus />
    </div>
  );
}
